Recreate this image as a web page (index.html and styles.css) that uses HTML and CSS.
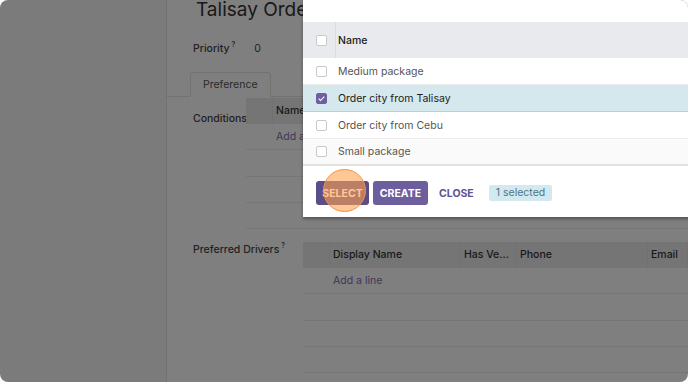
FILE: index.html
```html
<!DOCTYPE html>
<html lang="en">
<head>
    <meta charset="UTF-8">
    <meta name="viewport" content="width=device-width, initial-scale=1.0">
    <title>Talisay Order City - Select Conditions</title>
    <link rel="stylesheet" href="styles.css">
</head>
<body>
    <div class="window">
        <aside class="sidebar"></aside>

        <main class="sheet">
            <h1 class="title">Talisay Order City</h1>

            <div class="field">
                <span class="field-label">Priority<sup>?</sup></span>
                <span class="field-value">0</span>
            </div>

            <div class="tabs">
                <span class="tab">Preference</span>
            </div>

            <div class="group group-conditions">
                <span class="group-label">Conditions</span>
                <div class="list">
                    <div class="list-head">
                        <span class="cell cell-check"></span>
                        <span class="cell">Name</span>
                    </div>
                    <div class="list-row"><span class="cell cell-check"></span><a class="add-line" href="#">Add a line</a></div>
                    <div class="list-row"></div>
                    <div class="list-row"></div>
                    <div class="list-row"></div>
                </div>
            </div>

            <div class="group group-drivers">
                <span class="group-label">Preferred Drivers<sup>?</sup></span>
                <div class="list">
                    <div class="list-head">
                        <span class="cell cell-check"></span>
                        <span class="cell col-name">Display Name</span>
                        <span class="cell col-vehicle">Has Ve...</span>
                        <span class="cell col-phone">Phone</span>
                        <span class="cell col-email">Email</span>
                    </div>
                    <div class="list-row"><span class="cell cell-check"></span><a class="add-line" href="#">Add a line</a></div>
                    <div class="list-row"></div>
                    <div class="list-row"></div>
                    <div class="list-row"></div>
                </div>
            </div>
        </main>

        <div class="backdrop"></div>

        <div class="modal">
            <div class="modal-top"></div>
            <div class="picker">
                <div class="picker-head">
                    <span class="picker-check"><span class="checkbox"></span></span>
                    <span class="picker-name">Name</span>
                </div>
                <div class="picker-row">
                    <span class="picker-check"><span class="checkbox"></span></span>
                    <span class="picker-name">Medium package</span>
                </div>
                <div class="picker-row selected">
                    <span class="picker-check"><span class="checkbox checked"></span></span>
                    <span class="picker-name">Order city from Talisay</span>
                </div>
                <div class="picker-row">
                    <span class="picker-check"><span class="checkbox"></span></span>
                    <span class="picker-name">Order city from Cebu</span>
                </div>
                <div class="picker-row hover">
                    <span class="picker-check"><span class="checkbox"></span></span>
                    <span class="picker-name">Small package</span>
                </div>
            </div>
            <div class="modal-footer">
                <button class="btn btn-select">Select</button>
                <button class="btn btn-create">Create</button>
                <button class="btn-link">Close</button>
                <span class="badge">1 selected</span>
            </div>
        </div>

        <div class="click-marker"></div>
    </div>
</body>
</html>
```

FILE: styles.css
```css
/* Reset styles */
* {
    margin: 0;
    padding: 0;
    box-sizing: border-box;
}

body {
    font-family: Inter, "Liberation Sans", sans-serif;
    background-color: #fff;
    color: #333;
    font-size: 10.5px;
}

/* App window */
.window {
    position: relative;
    width: 688px;
    height: 382px;
    border-radius: 8px;
    overflow: hidden;
    display: grid;
    grid-template-columns: 167px 1fr;
}

.sidebar {
    background-color: #f6f6f6;
    border-right: 1px solid #e4e4e4;
}

/* Form sheet behind the dialog */
.sheet {
    background-color: #fff;
    padding-left: 26px;
}

.title {
    margin: 0 0 0 3px;
    font-size: 19px;
    line-height: 20px;
    font-weight: 400;
    color: #333;
    white-space: nowrap;
}

.field {
    display: flex;
    margin-top: 21px;
    line-height: 16px;
}

.field-label,
.group-label {
    color: #444;
    font-weight: 500;
    white-space: nowrap;
}

sup {
    font-size: 7px;
    line-height: 0;
    vertical-align: 5px;
    margin-left: 2px;
}

.field-value {
    margin-left: 19px;
    color: #444;
}

.tabs {
    margin: 15px 0 0 -26px;
    padding-left: 23px;
    border-bottom: 1px solid #e4e4e4;
    display: flex;
}

.tab {
    height: 25px;
    line-height: 24px;
    padding: 0 12px;
    margin-bottom: -1px;
    border: 1px solid #e4e4e4;
    border-bottom: 1px solid #fff;
    border-radius: 4px 4px 0 0;
    color: #555;
}

.group {
    display: flex;
}

.group-label {
    line-height: 16px;
}

.group-conditions {
    margin-top: 1px;
}

.group-conditions .group-label {
    width: 53px;
    padding-top: 13px;
}

.group-drivers {
    margin-top: 13px;
}

.group-drivers .group-label {
    width: 110px;
    padding-top: 0;
}

.list {
    flex: 1;
}

.list-head {
    display: flex;
    height: 26px;
    background-color: #ebebeb;
    color: #333;
    font-weight: 500;
}

.list-head .cell {
    border-right: 1px solid #e2e2e2;
}

.cell {
    line-height: 26px;
    padding-left: 3px;
    white-space: nowrap;
    overflow: hidden;
}

.cell-check {
    width: 27px;
    flex: none;
}

.col-name { width: 131px; }
.col-vehicle { width: 56px; }
.col-phone { width: 131px; }
.col-email { flex: 1; }

.list-row {
    display: flex;
    height: 26.3px;
    border-bottom: 1px solid #ececec;
}

.add-line {
    padding-left: 3px;
    line-height: 25px;
    color: #7f70b0;
    text-decoration: none;
}

/* Dim layer */
.backdrop {
    position: absolute;
    inset: 0;
    background-color: rgba(0, 0, 0, 0.5);
}

/* Select dialog */
.modal {
    position: absolute;
    left: 303px;
    top: 0;
    right: -20px;
    height: 217px;
    background-color: #fff;
    box-shadow: 0 2px 3px rgba(0, 0, 0, 0.35);
}

.modal-top {
    height: 22px;
}

.picker-head,
.picker-row {
    display: flex;
    align-items: center;
}

.picker-head {
    height: 36px;
    background-color: #e9eaed;
    color: #222;
    font-weight: 500;
}

.picker-head .picker-check {
    border-right: 1px solid #dcdde0;
}

.picker-check {
    width: 33px;
    height: 100%;
    padding-left: 13px;
    display: flex;
    align-items: center;
    flex: none;
}

.picker-name {
    padding-left: 2px;
}

.picker-row {
    height: 27px;
    border-bottom: 1px solid #ececec;
    color: #555;
}

.picker-row.selected {
    background-color: #d4e8ee;
    border-bottom-color: #b9d0d7;
    color: #222;
}

.picker-row.hover {
    background-color: #fafafa;
    border-bottom: 2px solid #e2e2e2;
}

.checkbox {
    width: 11px;
    height: 11px;
    border: 1px solid #c9c9c9;
    border-radius: 2px;
    background-color: #fff;
    position: relative;
}

.checkbox.checked {
    background-color: #6f5fa0;
    border-color: #6f5fa0;
}

.checkbox.checked::after {
    content: "";
    position: absolute;
    left: 3px;
    top: 1px;
    width: 2px;
    height: 5px;
    border: solid #fff;
    border-width: 0 1.5px 1.5px 0;
    transform: rotate(45deg);
}

.modal-footer {
    display: flex;
    align-items: center;
    gap: 4px;
    padding: 15px 13px 12px;
}

.btn {
    height: 24px;
    border: none;
    border-radius: 3px;
    color: #fff;
    font-family: inherit;
    font-size: 10.5px;
    font-weight: 700;
    text-transform: uppercase;
}

.btn-select {
    width: 53px;
    background-color: #5b4d88;
}

.btn-create {
    width: 55px;
    background-color: #6d5e9e;
}

.btn-link {
    margin-left: 7px;
    background: none;
    border: none;
    font-family: inherit;
    font-size: 10.5px;
    font-weight: 700;
    text-transform: uppercase;
    color: #5f5393;
}

.badge {
    margin-left: 11px;
    height: 16px;
    line-height: 16px;
    padding: 0 7px;
    background-color: #d3e9ef;
    color: #4a7684;
    border-radius: 2px;
}

/* Click highlight */
.click-marker {
    position: absolute;
    left: 323px;
    top: 169px;
    width: 43px;
    height: 43px;
    border-radius: 50%;
    background-color: rgba(255, 160, 80, 0.6);
    border: 1.5px solid #f09442;
}
```
